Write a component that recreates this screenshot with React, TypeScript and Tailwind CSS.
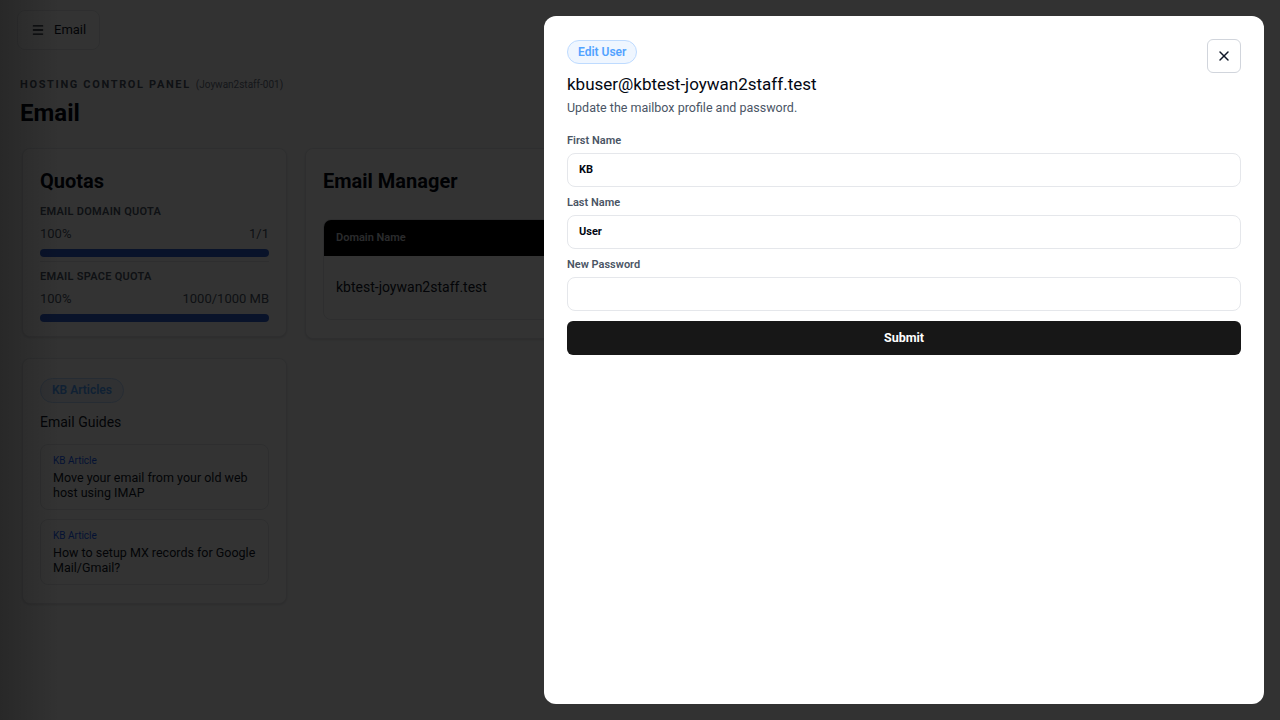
import { Menu, X } from "lucide-react";

const QuotaRow = ({ label, left, right }: { label: string; left: string; right: string }) => (
    <div>
        <div className="text-[11px] leading-[14px] font-semibold uppercase tracking-wide text-gray-600">{label}</div>
        <div className="mt-[7px] flex justify-between text-[13px] leading-[16px] text-gray-600">
            <span>{left}</span>
            <span>{right}</span>
        </div>
        <div className="mt-[7px] h-[8px] w-full rounded-full bg-[#2f5fd0]" />
    </div>
);

const Article = ({ title }: { title: string }) => (
    <div className="h-[66px] rounded-lg border border-gray-200 px-[12px] pt-[9px]">
        <div className="text-[10px] leading-[13px] text-blue-600">KB Article</div>
        <div className="mt-[3px] text-[12.5px] leading-[15px] text-gray-900">{title}</div>
    </div>
);

const Field = ({ label, value }: { label: string; value?: string }) => (
    <div>
        <div className="text-[11px] leading-[14px] font-semibold text-gray-600">{label}</div>
        <div className="mt-[5px] flex h-[34px] items-center rounded-lg border border-gray-200 bg-white px-[11px] text-[11px] font-bold text-gray-950">
            {value}
        </div>
    </div>
);

export default function App() {
    return (
        <div className="relative h-[720px] w-[1280px] overflow-hidden bg-gray-50 font-['Roboto',sans-serif]">
            <div className="px-[20px] pt-[10px]">
                <div className="ml-[-3px] inline-flex h-[40px] items-center gap-[9px] rounded-lg border border-gray-200 bg-white px-[13px] text-[13px] text-gray-900">
                    <Menu size={14} strokeWidth={2.2} />
                    <span>Email</span>
                </div>
                <div className="mt-[27px] flex items-baseline gap-[5px]">
                    <span className="text-[11px] leading-[14px] font-bold uppercase tracking-[0.15em] text-gray-600">Hosting Control Panel</span>
                    <span className="text-[10px] text-gray-500">(Joywan2staff-001)</span>
                </div>
                <h1 className="mt-[5px] text-[24px] leading-[32px] font-bold text-gray-950">Email</h1>
            </div>

            <div className="mt-[19px] flex items-start gap-[18px] px-[22px]">
                <div className="flex w-[265px] flex-col gap-[21px]">
                    <div className="rounded-lg border border-gray-200 bg-white px-[17px] pt-[18px] pb-[14px] shadow-sm">
                        <h2 className="text-[20px] leading-[28px] font-bold text-gray-950">Quotas</h2>
                        <div className="mt-[10px]">
                            <QuotaRow label="Email Domain Quota" left="100%" right="1/1" />
                        </div>
                        <div className="mt-[4px] border-t border-gray-200 pt-[8px]">
                            <QuotaRow label="Email Space Quota" left="100%" right="1000/1000 MB" />
                        </div>
                    </div>

                    <div className="rounded-lg border border-gray-200 bg-white px-[17px] pt-[18px] pb-[18px] shadow-sm">
                        <span className="inline-block rounded-full border border-blue-200 bg-blue-50 px-[11px] py-[3px] text-[12px] leading-[17px] font-semibold text-blue-400">
                            KB Articles
                        </span>
                        <div className="mt-[9px] text-[14px] leading-[20px] text-gray-900">Email Guides</div>
                        <div className="mt-[12px] flex flex-col gap-[9px]">
                            <Article title="Move your email from your old web host using IMAP" />
                            <Article title="How to setup MX records for Google Mail/Gmail?" />
                        </div>
                    </div>
                </div>

                <div className="flex-1 rounded-lg border border-gray-200 bg-white px-[17px] pt-[18px] pb-[18px] shadow-sm">
                    <h2 className="text-[20px] leading-[28px] font-bold text-gray-950">Email Manager</h2>
                    <div className="mt-[24px] overflow-hidden rounded-lg border border-gray-200">
                        <div className="flex h-[36px] items-center bg-black px-[12px] text-[11px] font-semibold text-gray-300">
                            Domain Name
                        </div>
                        <div className="flex h-[63px] items-center px-[12px] text-[14px] text-gray-900">
                            kbtest-joywan2staff.test
                        </div>
                    </div>
                </div>
            </div>

            {/* modal overlay */}
            <div className="absolute inset-0 bg-black/80" />
            <div className="absolute inset-y-0 left-0 w-[60px] bg-gradient-to-r from-black/20 to-transparent" />
            <div className="absolute top-[16px] right-[16px] bottom-[16px] w-[720px] rounded-xl bg-white px-[23px] pt-[23px]">
                <div className="flex items-start justify-between">
                    <div>
                        <span className="inline-block rounded-full border border-blue-200 bg-blue-50 px-[10px] py-[3px] text-[12px] leading-[16px] font-semibold text-blue-400">
                            Edit User
                        </span>
                        <div className="mt-[9px] text-[17px] leading-[22px] text-gray-950">kbuser@kbtest-joywan2staff.test</div>
                        <div className="mt-[5px] text-[12.5px] leading-[16px] text-gray-600">Update the mailbox profile and password.</div>
                    </div>
                    <button className="flex h-[34px] w-[34px] items-center justify-center rounded-md border border-gray-300 text-gray-900">
                        <X size={16} strokeWidth={2.2} />
                    </button>
                </div>
                <div className="mt-[18px] flex flex-col gap-[9px]">
                    <Field label="First Name" value="KB" />
                    <Field label="Last Name" value="User" />
                    <Field label="New Password" />
                </div>
                <button className="mt-[10px] flex h-[34px] w-full items-center justify-center rounded-md bg-[#171717] text-[12.5px] font-bold text-white">
                    Submit
                </button>
            </div>
        </div>
    );
}
